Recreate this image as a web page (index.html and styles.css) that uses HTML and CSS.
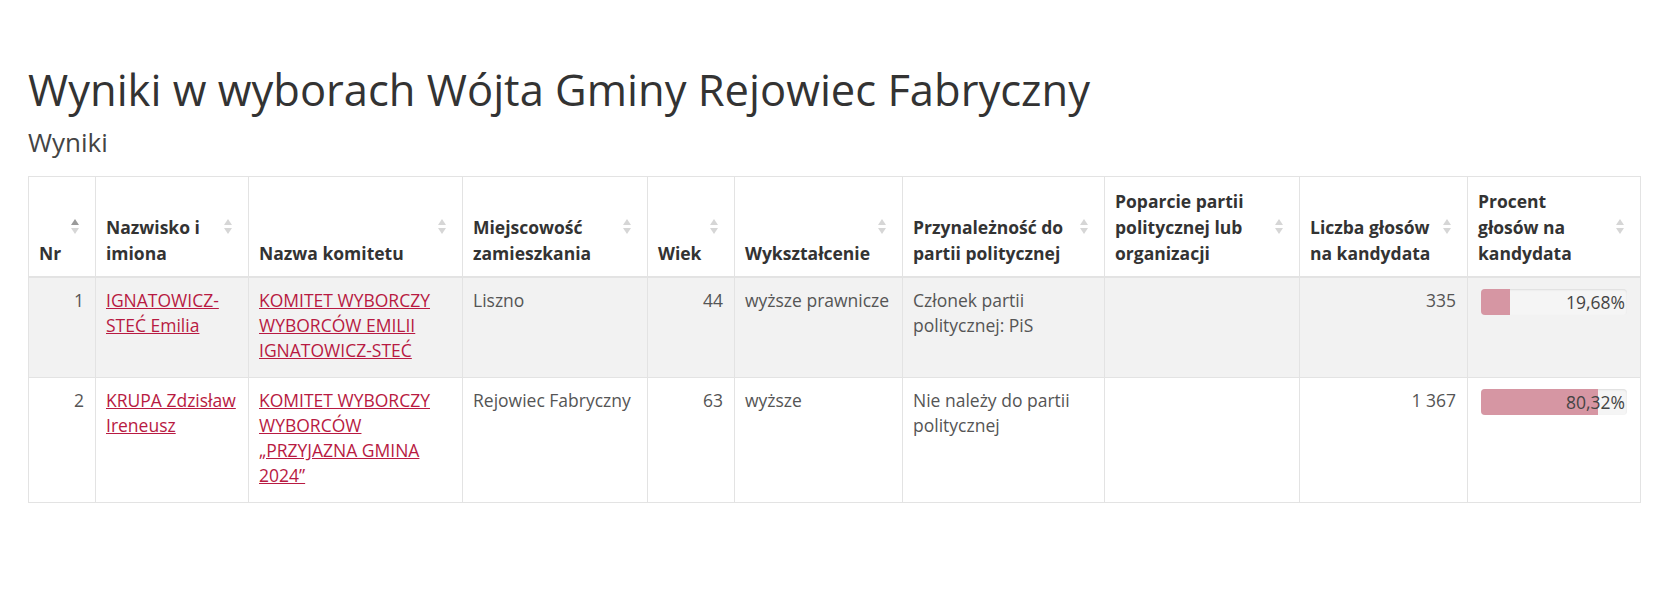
FILE: index.html
```html
<!DOCTYPE html>
<html lang="pl">
<head>
<meta charset="utf-8">
<title>Wyniki w wyborach Wójta Gminy Rejowiec Fabryczny</title>
<link rel="stylesheet" href="styles.css">
</head>
<body>
<div class="page">
  <h1 class="title">Wyniki w wyborach Wójta Gminy Rejowiec Fabryczny</h1>
  <h2 class="subtitle">Wyniki</h2>
  <table class="results">
    <colgroup>
      <col style="width:67px"><col style="width:153px"><col style="width:214px"><col style="width:185px"><col style="width:87px"><col style="width:168px"><col style="width:202px"><col style="width:195px"><col style="width:168px"><col style="width:173px">
    </colgroup>
    <thead>
      <tr>
        <th class="sort sort-asc">Nr</th>
        <th class="sort">Nazwisko i imiona</th>
        <th class="sort">Nazwa komitetu</th>
        <th class="sort">Miejscowość zamieszkania</th>
        <th class="sort">Wiek</th>
        <th class="sort">Wykształcenie</th>
        <th class="sort">Przynależność do partii politycznej</th>
        <th class="sort">Poparcie partii politycznej lub organizacji</th>
        <th class="sort">Liczba głosów na kandydata</th>
        <th class="sort">Procent głosów na kandydata</th>
      </tr>
    </thead>
    <tbody>
      <tr class="odd">
        <td class="num">1</td>
        <td><a href="#">IGNATOWICZ-STEĆ Emilia</a></td>
        <td><a href="#">KOMITET WYBORCZY WYBORCÓW EMILII IGNATOWICZ-STEĆ</a></td>
        <td>Liszno</td>
        <td class="num">44</td>
        <td>wyższe prawnicze</td>
        <td>Członek partii politycznej: PiS</td>
        <td></td>
        <td class="num">335</td>
        <td><div class="progress"><div class="bar" style="width:19.68%"></div><span class="pct">19,68%</span></div></td>
      </tr>
      <tr>
        <td class="num">2</td>
        <td><a href="#">KRUPA Zdzisław Ireneusz</a></td>
        <td><a href="#">KOMITET WYBORCZY WYBORCÓW „PRZYJAZNA GMINA 2024”</a></td>
        <td>Rejowiec Fabryczny</td>
        <td class="num">63</td>
        <td>wyższe</td>
        <td>Nie należy do partii politycznej</td>
        <td></td>
        <td class="num">1 367</td>
        <td><div class="progress"><div class="bar" style="width:80.32%"></div><span class="pct">80,32%</span></div></td>
      </tr>
    </tbody>
  </table>
</div>
</body>
</html>
```

FILE: styles.css
```css
html, body {
  margin: 0;
  padding: 0;
  background: #fff;
}
body {
  font-family: "Open Sans", "Liberation Sans", sans-serif;
  font-size: 17.5px;
  line-height: 25px;
  color: #555;
}
.page {
  padding: 0 21px 0 28px;
}
.title {
  margin: 0;
  padding-top: 64px;
  font-size: 43.5px;
  line-height: 52px;
  font-weight: 400;
  color: #333;
}
.subtitle {
  margin: 8px 0 16px;
  font-size: 26px;
  line-height: 36px;
  font-weight: 400;
  color: #444;
}
.results {
  width: 1612px;
  table-layout: fixed;
  border-collapse: collapse;
  border: 1px solid #e3e3e3;
}
.results th,
.results td {
  border: 1px solid #e3e3e3;
  text-align: left;
}
.results th {
  position: relative;
  vertical-align: bottom;
  padding: 11px 30px 10px 10px;
  line-height: 26px;
  font-weight: 700;
  color: #333;
  border-bottom-width: 2px;
}
.results td {
  vertical-align: top;
  padding: 10px 11px 14px 10px;
}
.results td.num {
  text-align: right;
}
.results tr.odd td {
  background: #f2f2f2;
}
.results a {
  color: #b81a42;
  text-decoration: underline;
}
.sort::before,
.sort::after {
  content: "";
  position: absolute;
  right: 16px;
  width: 0;
  height: 0;
  border-left: 4px solid transparent;
  border-right: 4px solid transparent;
}
.sort::before {
  top: 42px;
  border-bottom: 6px solid #d6d6d6;
}
.sort::after {
  top: 51px;
  border-top: 6px solid #d6d6d6;
}
.sort-asc::before {
  border-bottom-color: #9a9a9a;
}
.progress {
  position: relative;
  height: 26px;
  margin: 1px 2px 0 3px;
  background: #f5f5f5;
  border-radius: 4px;
  box-shadow: inset 0 1px 2px rgba(0, 0, 0, 0.1);
  overflow: hidden;
}
.bar {
  height: 100%;
  background: #d696a3;
}
.pct {
  position: absolute;
  top: 0;
  right: 2px;
  line-height: 26px;
  color: #444;
}
```
